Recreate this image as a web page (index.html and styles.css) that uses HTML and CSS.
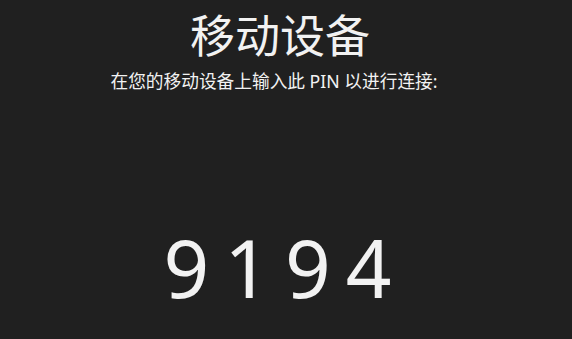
FILE: index.html
```html
<!DOCTYPE html>
<html lang="zh-CN">
<head>
    <meta charset="UTF-8">
    <meta name="viewport" content="width=device-width, initial-scale=1.0">
    <title>移动设备</title>
    <link rel="stylesheet" href="styles.css">
</head>
<body>
    <div class="pair">
        <h1 class="title">移动设备</h1>
        <p class="hint">在您的移动设备上输入此 PIN 以进行连接:</p>
        <div class="pin">9194</div>
    </div>
</body>
</html>
```

FILE: styles.css
```css
body {
    margin: 0;
    padding: 0;
    background: #202020;
    color: #f2f2f2;
    font-family: "Noto Sans", "Noto Sans CJK SC", sans-serif;
}

.pair {
    display: flex;
    flex-direction: column;
    align-items: center;
    height: 339px;
    padding-right: 16px;
    overflow: hidden;
}

.title {
    margin: 4px 0 0 4px;
    font-size: 45px;
    font-weight: 400;
    line-height: 64px;
}

.hint {
    margin: 0 8px 0 0;
    font-size: 17.7px;
    line-height: 26px;
}

.pin {
    margin-top: 123px;
    margin-left: 14px;
    font-size: 80px;
    line-height: 100px;
    letter-spacing: 15px;
}
```
